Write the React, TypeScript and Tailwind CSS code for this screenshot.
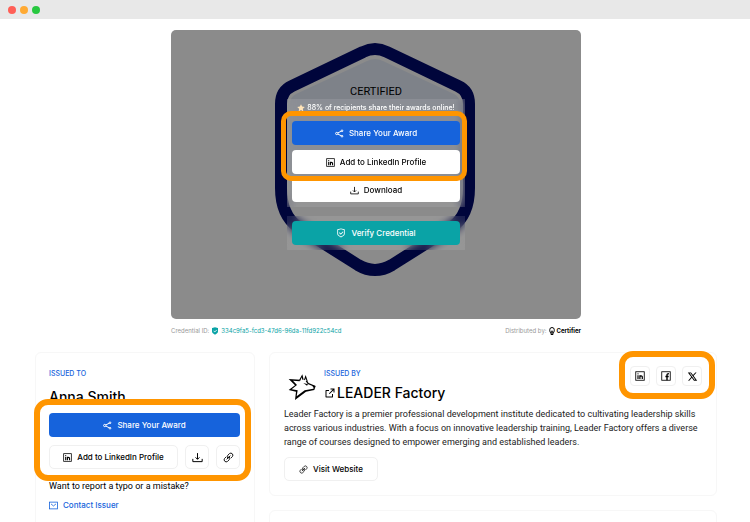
import React from 'react';
import { RiExternalLinkLine, RiShieldCheckFill, RiShieldCheckLine, RiStarFill, RiTwitterXLine } from 'react-icons/ri';

const outlineButton =
  'flex h-6 items-center justify-center gap-[5px] rounded-[5px] border border-[#f0f0f0] bg-white text-black';

interface IconProps {
  size?: number;
}

function ShareIcon({ size = 9 }: IconProps) {
  return (
    <svg width={size} height={size} viewBox="0 0 18 18" fill="none" stroke="currentColor" strokeWidth="2">
      <circle cx="3.5" cy="9" r="2.3" />
      <circle cx="14" cy="3.6" r="1.7" />
      <circle cx="14" cy="14.4" r="1.7" />
      <path d="M5.6 7.9 12.2 4.6M5.6 10.1l6.6 3.3" />
    </svg>
  );
}

function LinkedInIcon({ size = 9 }: IconProps) {
  return (
    <svg width={size} height={size} viewBox="0 0 20 20" fill="none" stroke="currentColor" strokeWidth="1.7">
      <rect x="1.5" y="1.5" width="17" height="17" />
      <path d="M6 8.5V16M9.8 8.5V16M9.8 12.2c0-3.4 4.8-3.4 4.8 0V16" strokeWidth="2.4" />
      <circle cx="6" cy="5.6" r="1.3" fill="currentColor" stroke="none" />
    </svg>
  );
}

function FacebookIcon({ size = 9 }: IconProps) {
  return (
    <svg width={size} height={size} viewBox="0 0 20 20" fill="none" stroke="currentColor" strokeWidth="1.7">
      <rect x="1.5" y="1.5" width="17" height="17" />
      <path d="M12 18.5V8.2c0-2 1-3 3.8-2.8M8.8 11h6.6" strokeWidth="2.8" />
    </svg>
  );
}

function DownloadIcon({ size = 9 }: IconProps) {
  return (
    <svg width={size} height={size} viewBox="0 0 20 20" fill="none" stroke="currentColor" strokeWidth="1.8">
      <path d="M10 2v11M6.5 9.8 10 13.3l3.5-3.5M1.5 12.5v5h17v-5" />
    </svg>
  );
}

function LinkIcon({ size = 9 }: IconProps) {
  return (
    <svg width={size} height={size} viewBox="0 0 24 24" fill="none" stroke="currentColor" strokeWidth="2" strokeLinecap="round">
      <path d="M10.5 13.5a4.6 4.6 0 0 1 0-6.4l3.8-3.8a4.6 4.6 0 0 1 6.4 6.4l-3 3" />
      <path d="M13.5 10.5a4.6 4.6 0 0 1 0 6.4l-3.8 3.8a4.6 4.6 0 0 1-6.4-6.4l3-3" />
      <path d="m8.5 15.5 7-7" />
    </svg>
  );
}

function MailIcon() {
  return (
    <svg width="9" height="9" viewBox="0 0 20 20" fill="none" stroke="currentColor" strokeWidth="1.8">
      <rect x="1" y="2.5" width="18" height="15" />
      <path d="M4.5 6.5 10 11l5.5-4.5" />
    </svg>
  );
}

function WolfLogo() {
  return (
    <svg width="28" height="26" viewBox="0 0 84 78" role="img" aria-label="LEADER Factory logo">
      <path d="M2 15 36 17 35 22 15 20 27 33 11 46 29 49 26 67 50 49 76 44 79 38 59 30 53 21 56 20 62 27 83 36 79 48 54 53 21 78 24 53 2 48 21 34Z" />
      <path d="M33 19 43 1 47 17H43L41 10 37 20Z" />
      <path d="M48 17 53 3 60 24 56 22 53 13 51 19Z" />
      <path d="m46 27 14 4-3 4Z" />
      <path d="m72 34 10 2-5 6Z" />
    </svg>
  );
}

function Hexagon() {
  const outline =
    'M363 52Q375 46 387 52L458 86Q469 91 469 104V188Q469 215 452 227L392 265Q375 275 358 265L298 227Q281 215 281 188V104Q281 91 292 86Z';
  return (
    <svg className="absolute left-1/2 top-[10px] -translate-x-1/2" width="212" height="240" viewBox="270 40 212 240">
      <defs>
        <linearGradient id="badge" x1="0" y1="0" x2="0" y2="1">
          <stop offset="0" stopColor="#7e8289" />
          <stop offset="0.6" stopColor="#7e8289" />
          <stop offset="0.75" stopColor="#8b8b8b" />
        </linearGradient>
      </defs>
      <path d={outline} fill="#8b8b8b" stroke="#00053b" strokeWidth="12" />
      <path d="M367 61Q375 57 383 61L454 94Q460 97 460 104V200L375 255L290 200V104Q290 97 296 94Z" fill="url(#badge)" />
    </svg>
  );
}

interface HighlightProps {
  children: React.ReactNode;
  className: string;
  ring: string;
}

function Highlight({ children, className, ring }: HighlightProps) {
  return (
    <div className={`relative ${className}`}>
      <div className={`pointer-events-none absolute border-[#ff9500] ${ring}`} />
      {children}
    </div>
  );
}

function Hero() {
  return (
    <section className="relative flex flex-col items-center rounded-[5px] bg-[#8b8b8b] pt-[55px] pb-[69px] text-[8px] font-medium">
      <Hexagon />
      <p className="relative font-[Roboto] text-[11px] leading-[14px] font-normal text-black">CERTIFIED</p>
      <div className="relative flex w-[178px] flex-col gap-1 bg-white/10 px-[5px] pt-[3px] pb-[5px] backdrop-blur-[4px]">
        <p className="mb-[3px] flex h-3 items-center justify-center gap-[2px] text-[7px] whitespace-nowrap text-white">
          <RiStarFill size={8} color="#ffe3b8" />
          88% of recipients share their awards online!
        </p>
        <Highlight
          className="flex flex-col gap-[5px]"
          ring="-left-[11px] -right-[7px] -top-[10px] -bottom-[7px] rounded-[10px] border-[5px]"
        >
          <button className="flex h-6 items-center justify-center gap-[5px] rounded-[4px] bg-[#1663dc] text-white">
            <ShareIcon />
            Share Your Award
          </button>
          <button className="flex h-6 items-center justify-center gap-[5px] rounded-[4px] bg-white text-black">
            <LinkedInIcon />
            Add to LinkedIn Profile
          </button>
        </Highlight>
        <button className="flex h-6 items-center justify-center gap-[5px] rounded-b-[4px] bg-white text-black">
          <DownloadIcon />
          Download
        </button>
      </div>
      <div className="relative mt-[9px] w-[178px] bg-white/10 p-[5px] backdrop-blur-[4px]">
        <button className="flex h-6 w-full items-center justify-center gap-[5px] rounded-[4px] bg-[#0aa3a6] text-white">
          <RiShieldCheckLine size={10} />
          Verify Credential
        </button>
      </div>
    </section>
  );
}

function RecipientCard() {
  return (
    <section className="rounded-[6px] border border-[#f7f7f7] pt-4 pr-[14px] pb-6 pl-[13px]">
      <h2 className="text-[7px] leading-[10px] font-medium text-[#1663dc]">ISSUED TO</h2>
      <p className="mt-2 text-[14px] leading-5 font-medium">Anna Smith</p>
      <Highlight
        className="mt-[6px] flex flex-col gap-2 text-[8px] font-medium"
        ring="-left-[15px] -right-[11px] -top-[14px] -bottom-[12px] rounded-[14px] border-[6px]"
      >
        <button className="flex h-6 items-center justify-center gap-[5px] rounded-[4px] bg-[#1663dc] text-white">
          <ShareIcon />
          Share Your Award
        </button>
        <div className="flex gap-[7px]">
          <button className={`${outlineButton} flex-1`}>
            <LinkedInIcon />
            Add to LinkedIn Profile
          </button>
          <button aria-label="Download" className={`${outlineButton} w-6`}>
            <DownloadIcon size={11} />
          </button>
          <button aria-label="Copy link" className={`${outlineButton} w-6`}>
            <LinkIcon size={11} />
          </button>
        </div>
      </Highlight>
      <p className="mt-[11px] font-[Roboto,sans-serif] text-[9px] leading-3">Want to report a typo or a mistake?</p>
      <a href="#contact" className="mt-[7px] flex items-center gap-[5px] text-[8px] leading-3 font-medium text-[#1663dc]">
        <MailIcon />
        Contact Issuer
      </a>
    </section>
  );
}

const socials = [
  { label: 'LinkedIn', Icon: LinkedInIcon },
  { label: 'Facebook', Icon: FacebookIcon },
  { label: 'X', Icon: RiTwitterXLine },
];

function IssuerCard() {
  return (
    <section className="rounded-[6px] border border-[#f7f7f7] px-[14px] pt-[13px] pb-[14px]">
      <div className="flex items-start">
        <div className="flex w-10 justify-center pt-2 pr-1">
          <WolfLogo />
        </div>
        <div className="pt-[3px]">
          <h2 className="text-[7px] leading-[10px] font-medium text-[#1663dc]">ISSUED BY</h2>
          <p className="mt-1 flex items-center gap-px text-[14px] leading-5 font-medium">
            <RiExternalLinkLine size={12} />
            LEADER Factory
          </p>
        </div>
        <Highlight
          className="ml-auto flex gap-[6px]"
          ring="-left-[11px] -right-[13px] -top-[15px] -bottom-[13px] rounded-[14px] border-[6px]"
        >
          {socials.map(({ label, Icon }) => (
            <a
              key={label}
              href="#share"
              aria-label={label}
              className="flex size-5 items-center justify-center rounded-[4px] border border-[#f0f0f0]"
            >
              <Icon size={label === 'X' ? 11 : 10} />
            </a>
          ))}
        </Highlight>
      </div>
      <p className="mt-1 font-[Roboto,sans-serif] text-[9px] leading-[14px] text-[#222]">
        Leader Factory is a premier professional development institute dedicated to cultivating leadership skills across
        various industries. With a focus on innovative leadership training, Leader Factory offers a diverse range of
        courses designed to empower emerging and established leaders.
      </p>
      <a href="#website" className={`${outlineButton} mt-2 w-[94px] text-[8px] font-medium`}>
        <LinkIcon />
        Visit Website
      </a>
    </section>
  );
}

export default function App() {
  return (
    <div className="h-screen overflow-hidden bg-white font-[Inter,sans-serif] text-black">
      <header className="flex h-[19px] items-center gap-1 bg-[#e8e8e8] px-2">
        <span className="size-2 rounded-full bg-[#ff5f57]" />
        <span className="size-2 rounded-full bg-[#ffaa33]" />
        <span className="size-2 rounded-full bg-[#28c840]" />
      </header>
      <main className="pt-[11px] pr-[33px] pl-[35px]">
        <div className="mx-auto max-w-[410px]">
          <Hero />
          <div className="mt-[7px] flex items-center justify-between text-[6px] leading-[10px] text-[#999]">
            <p className="flex items-center gap-[2px]">
              Credential ID:
              <RiShieldCheckFill size={8} color="#0aa3a6" />
              <a href="#credential" className="text-[#0aa3a6]">
                334c9fa5-fcd3-47d6-96da-11fd922c54cd
              </a>
            </p>
            <p className="flex items-center gap-[2px]">
              Distributed by:
              <svg width="6" height="8" viewBox="0 0 12 16" fill="none" stroke="#000" strokeWidth="2">
                <rect x="1.5" y="1" width="9" height="11" rx="4.5" />
                <path d="M4 11v4h4v-4M4 8.5h4" />
              </svg>
              <span className="font-bold text-black">Certifier</span>
            </p>
          </div>
        </div>
        <div className="mt-4 grid grid-cols-[220px_1fr] gap-[14px]">
          <RecipientCard />
          <div className="flex flex-col gap-[14px]">
            <IssuerCard />
            <section className="min-h-16 flex-1 rounded-[6px] border border-[#f7f7f7]" />
          </div>
        </div>
      </main>
    </div>
  );
}
